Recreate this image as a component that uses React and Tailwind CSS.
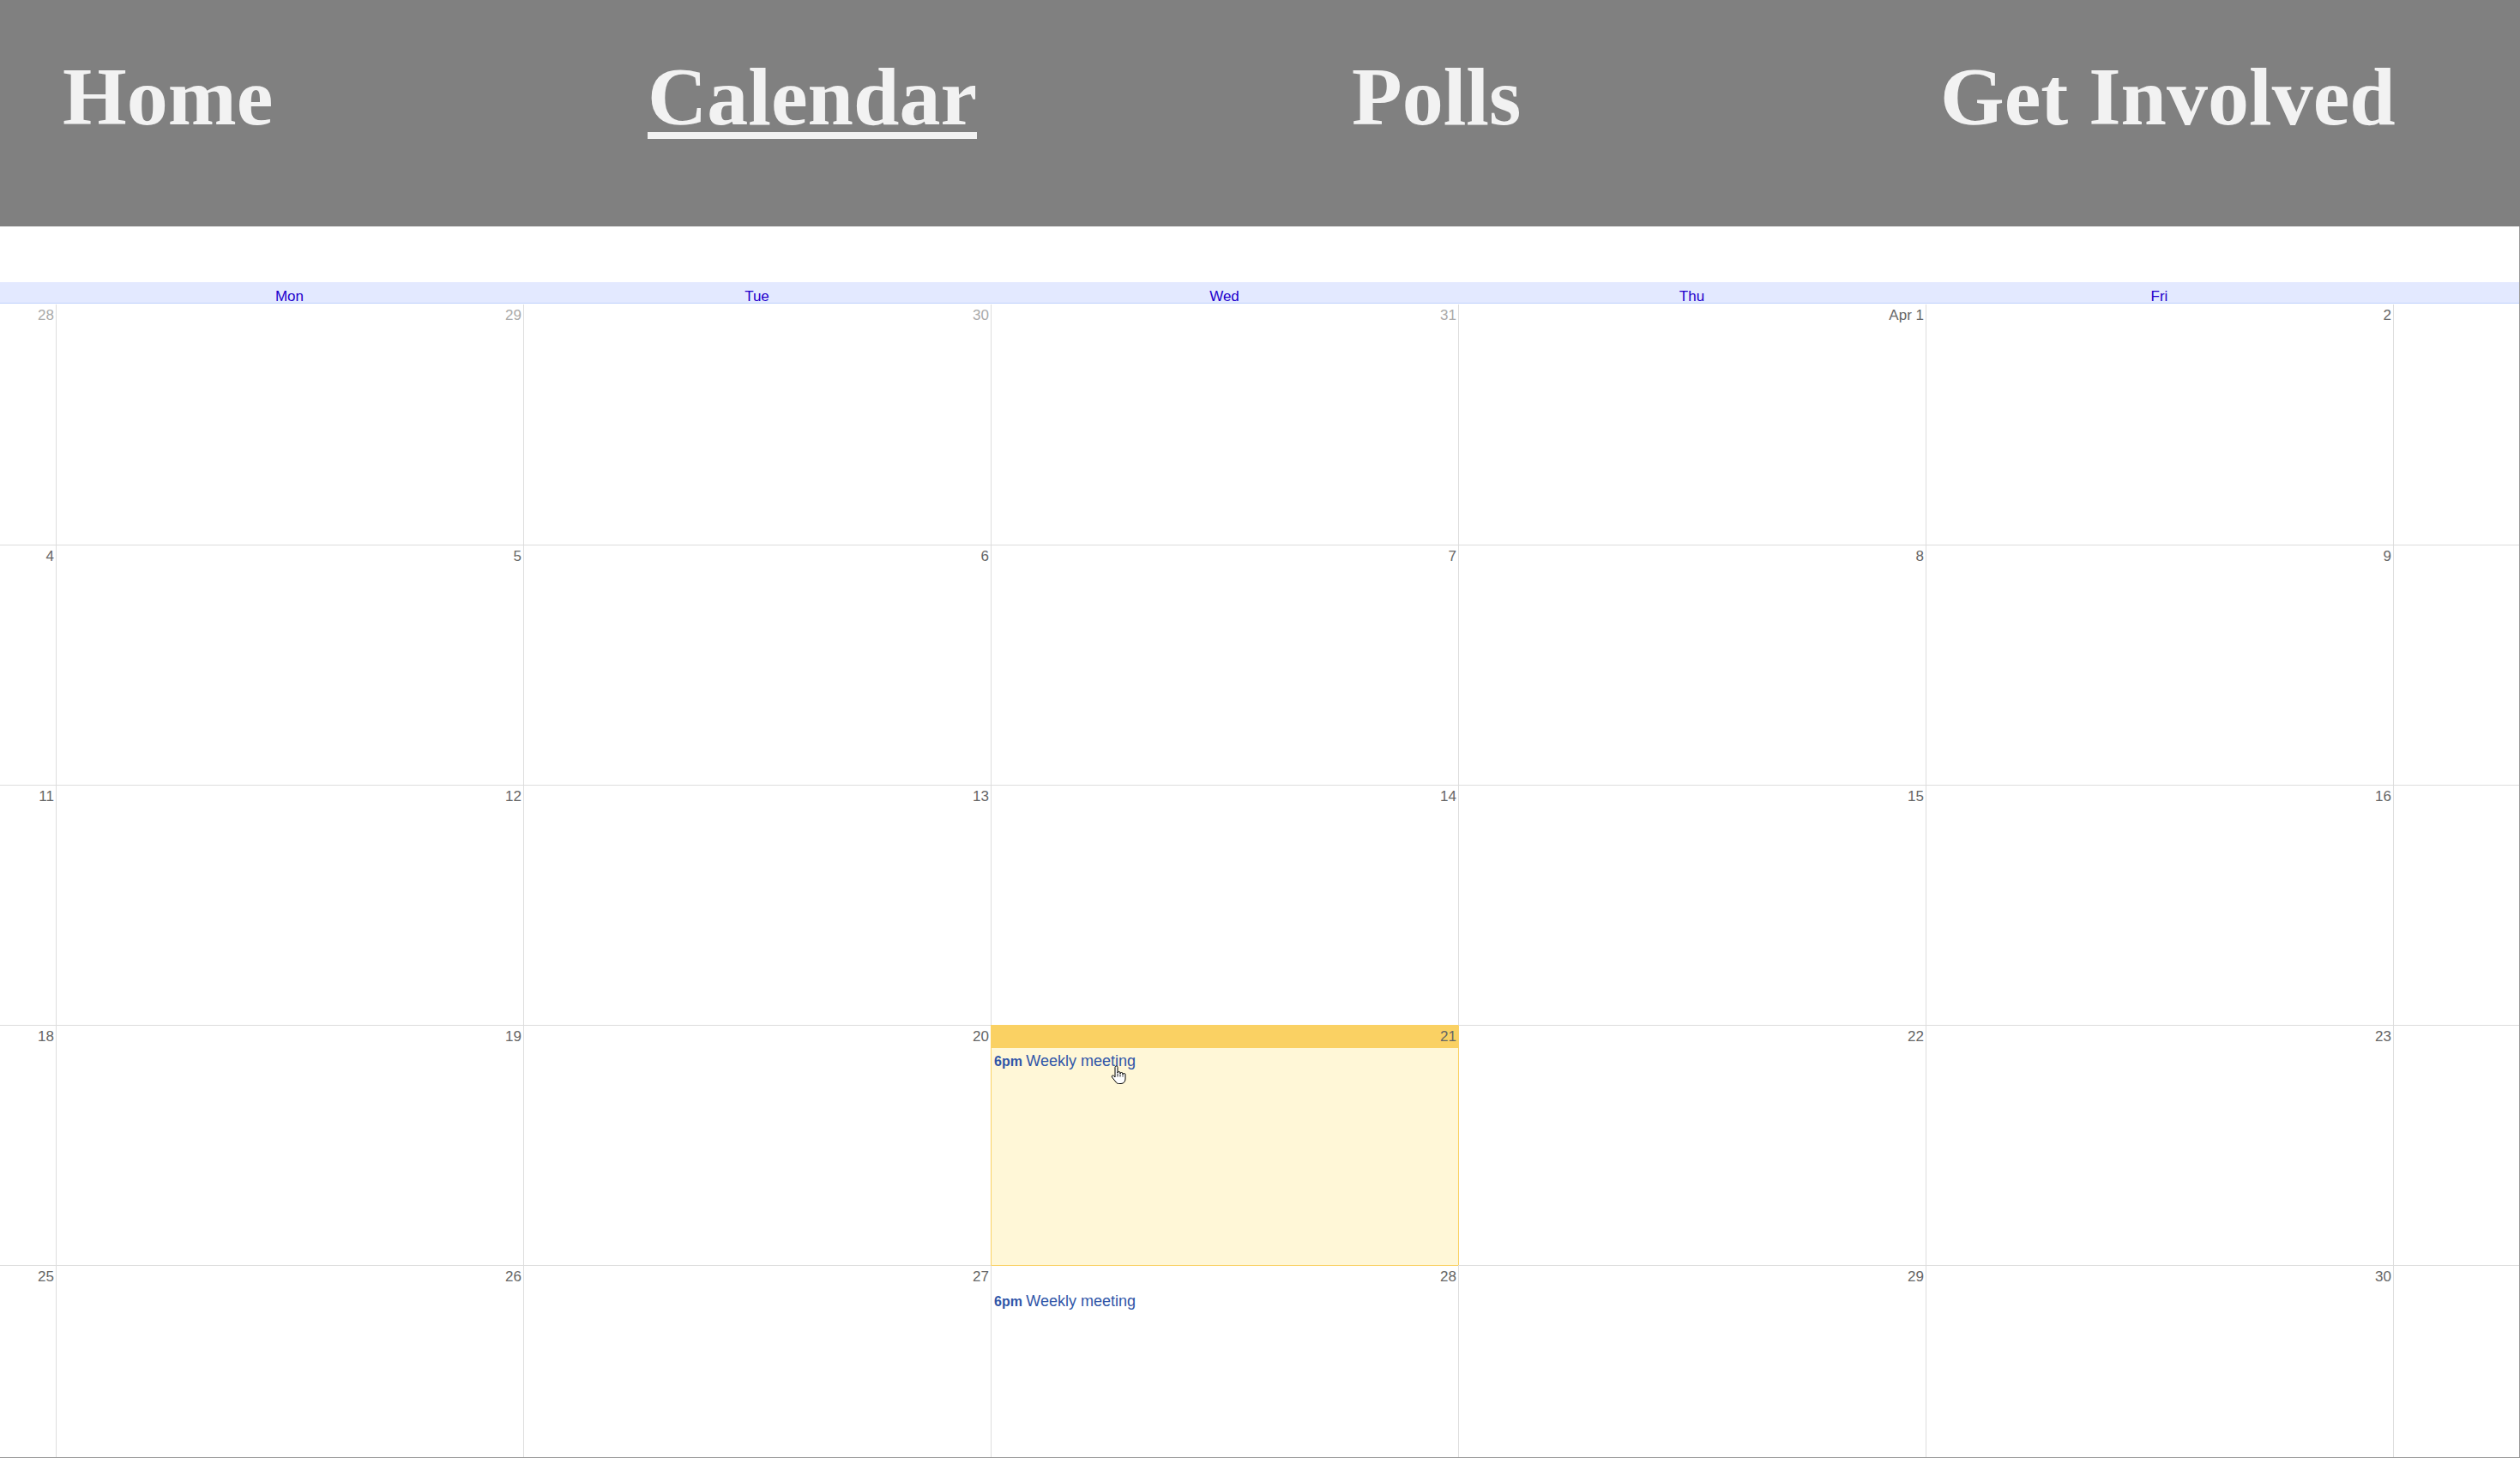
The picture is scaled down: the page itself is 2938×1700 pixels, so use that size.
import React from "react";

const weeks = [
  [
    { d: "28", o: true },
    { d: "29", o: true },
    { d: "30", o: true },
    { d: "31", o: true },
    { d: "Apr 1" },
    { d: "2" },
    { d: "" },
  ],
  ["4", "5", "6", "7", "8", "9", ""].map((d) => ({ d })),
  ["11", "12", "13", "14", "15", "16", ""].map((d) => ({ d })),
  [
    { d: "18" },
    { d: "19" },
    { d: "20" },
    { d: "21", today: true, event: true },
    { d: "22", afterToday: true },
    { d: "23" },
    { d: "" },
  ],
  [
    { d: "25" },
    { d: "26" },
    { d: "27" },
    { d: "28", event: true, belowToday: true },
    { d: "29" },
    { d: "30" },
    { d: "", o: true },
  ],
];

const days = ["", "Mon", "Tue", "Wed", "Thu", "Fri", ""];

function HandCursor() {
  return (
    <svg
      width="18"
      height="22"
      viewBox="0 0 18 22"
      className="pointer-events-none absolute left-[139px] top-[46px]"
    >
      <path
        d="M5 2.5a1.5 1.5 0 0 1 3 0V9a1.5 1.5 0 0 1 3 0v1a1.5 1.5 0 0 1 3 0v1a1.5 1.5 0 0 1 3 0V16c0 3-2 5.5-5 5.5H9.5c-2 0-3-1-4-2.5L1.5 14a1.3 1.3 0 0 1 2.1-1.6L5 14Z"
        fill="#ffffff"
        stroke="#000000"
        strokeWidth="1"
        strokeLinejoin="round"
      />
      <path d="M8 9.5v4M11 10.5v3M14 11.5v2" stroke="#000000" strokeWidth="0.9" fill="none" />
    </svg>
  );
}

function Event() {
  return (
    <div className="mt-[4px] whitespace-nowrap pl-[3px] leading-[22px] text-[#2f55a8]">
      <span className="text-[16px] font-bold">6pm</span>{" "}
      <span className="text-[18px]">Weekly meeting</span>
    </div>
  );
}

export default function App() {
  return (
    <div className="h-[1700px] w-full overflow-hidden bg-white font-['Liberation_Sans',Arial,sans-serif]">
      <nav className="flex h-[264px] bg-[#808080] pl-[73px] pt-[60px] font-['Liberation_Serif','Times_New_Roman',serif] text-[96px] font-bold leading-[106px] text-[#f2f2f2]">
        <div className="w-[682px] shrink-0">
          <a>Home</a>
        </div>
        <div className="w-[821px] shrink-0">
          <a className="underline decoration-[8px] underline-offset-[9px]">Calendar</a>
        </div>
        <div className="w-[686px] shrink-0">
          <a>Polls</a>
        </div>
        <div className="shrink-0 whitespace-nowrap">
          <a>Get Involved</a>
        </div>
      </nav>

      <div className="h-[1436px] overflow-hidden border-b border-r border-[#999999]">
        <div className="h-[65px]" />
        <div className="-ml-[480px] w-[3815px]">
          <div className="grid h-[25px] grid-cols-7 border-b border-[#bfd0fb] bg-[#e3e9ff]">
            {days.map((d, i) => (
              <div key={i} className="pt-[7px] text-center text-[17px] leading-[19px] text-[#2200cc]">
                {d}
              </div>
            ))}
          </div>
          <div className="mt-[1px]">
            {weeks.map((week, wi) => (
              <div key={wi} className="grid grid-cols-7">
                {week.map((c, ci) => {
                  const cls = [
                    "relative h-[280px] border-l",
                    wi > 0 ? "border-t" : "",
                    c.today
                      ? "border-[#fad163] bg-[#fff7d7]"
                      : c.afterToday
                      ? "border-l-[#fad163] border-t-[#dddddd]"
                      : c.belowToday
                      ? "border-t-[#fad163] border-l-[#dddddd]"
                      : "border-[#dddddd] bg-white",
                  ].join(" ");
                  return (
                    <div key={ci} className={cls}>
                      <div
                        className={
                          "h-[26px] pr-[2px] text-right text-[17px] leading-[26px] " +
                          (c.today ? "bg-[#fad163] " : "") +
                          (c.o ? "text-[#aaaaaa]" : "text-[#666666]")
                        }
                      >
                        {c.d}
                      </div>
                      {c.event && <Event />}
                      {c.today && <HandCursor />}
                    </div>
                  );
                })}
              </div>
            ))}
          </div>
        </div>
      </div>
    </div>
  );
}
